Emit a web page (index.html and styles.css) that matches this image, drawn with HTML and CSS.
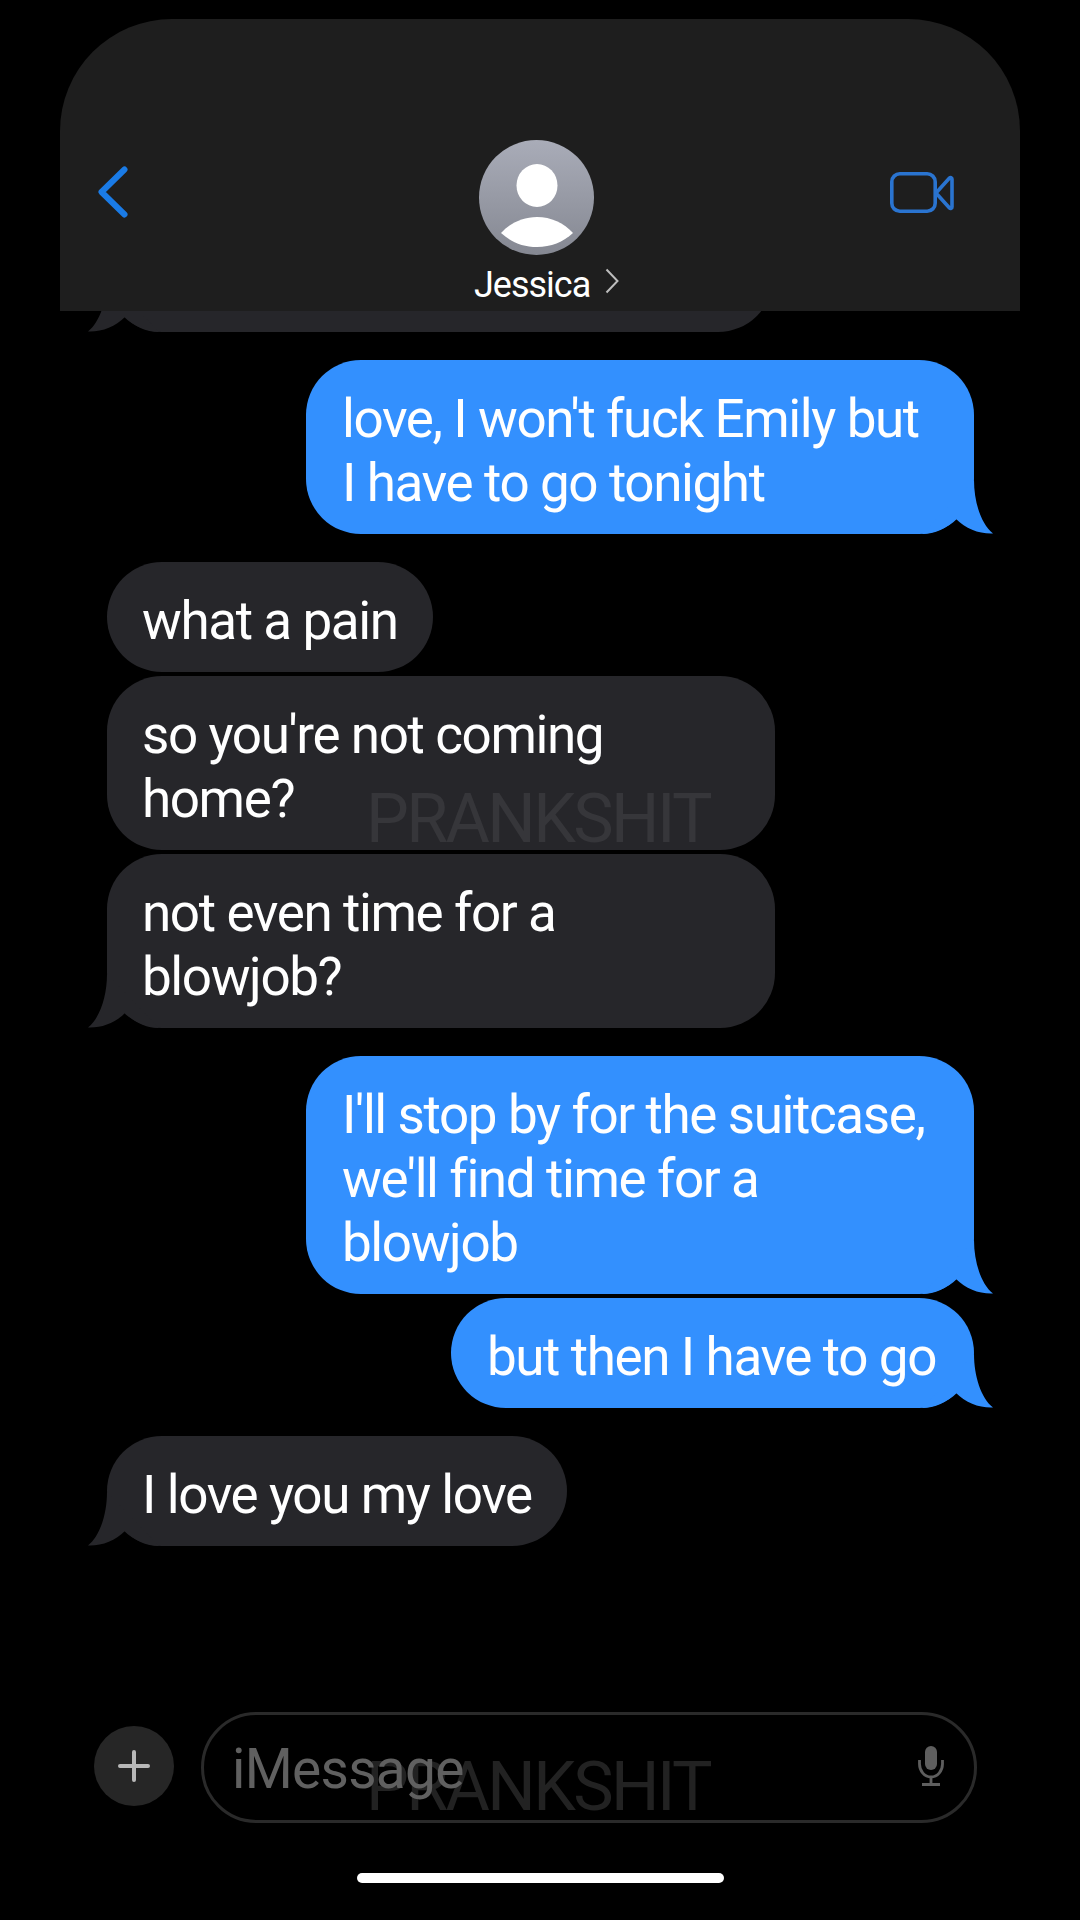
FILE: index.html
```html
<!DOCTYPE html>
<html lang="en">
<head>
<meta charset="utf-8">
<title>Jessica</title>
<link rel="stylesheet" href="styles.css">
</head>
<body>
<div class="page">
  <header class="header">
    <div class="nav-left">
      <svg class="back" viewBox="0 0 30 52" aria-hidden="true"><path d="M26.500 3.500 3.500 26l23 22.500" /></svg>
    </div>
    <div class="contact">
      <svg class="avatar" viewBox="0 0 115 115" aria-hidden="true">
        <defs><linearGradient id="av" x1="0" y1="0" x2="0" y2="1"><stop offset="0" stop-color="#a9acb8"/><stop offset="1" stop-color="#858892"/></linearGradient></defs>
        <circle cx="57.500" cy="57.500" r="57.500" fill="url(#av)"/>
        <ellipse cx="58" cy="45.500" rx="20.500" ry="21.500" fill="#fff"/>
        <path d="M22 93C31 83 44 77 58 77s27 6 36 16C84 102 72 107 58 107S32 102 22 93Z" fill="#fff"/>
      </svg>
      <div class="name-row">
        <span class="name">Jessica</span>
        <svg class="name-chev" viewBox="0 0 14 26" aria-hidden="true"><path d="M1.500 1.500 12.500 13 1.500 24.500"/></svg>
      </div>
    </div>
    <div class="nav-right">
      <svg class="video" viewBox="0 0 64 45" aria-hidden="true">
        <rect x="1.800" y="3.800" width="43.400" height="37.400" rx="8"/>
        <path d="M46 23 59.500 8c1-1 2.500-.5 2.500 1v28c0 1.500-1.500 2-2.500 1Z"/>
      </svg>
    </div>
  </header>

  <main class="thread">
    <div class="bubble in tail clipped">&nbsp;
      <svg class="tail-in" viewBox="0 0 72 54" aria-hidden="true"><path d="M53 0C53 22 60 44 72 53.500 58 54 45 49 35 39 26 48 14 54 1 54Z"/></svg>
    </div>
    <div class="bubble out tail wide group">love, I won't fuck Emily but<br>I have to go tonight
      <svg class="tail-out" viewBox="0 0 72 54" aria-hidden="true"><path d="M53 0C53 22 60 44 72 53.500 58 54 45 49 35 39 26 48 14 54 1 54Z"/></svg>
    </div>
    <div class="bubble in group">what a pain</div>
    <div class="bubble in wide near">so you're not coming<br>home?</div>
    <div class="bubble in tail wide near">not even time for a<br>blowjob?
      <svg class="tail-in" viewBox="0 0 72 54" aria-hidden="true"><path d="M53 0C53 22 60 44 72 53.500 58 54 45 49 35 39 26 48 14 54 1 54Z"/></svg>
    </div>
    <div class="bubble out tail wide group">I'll stop by for the suitcase,<br>we'll find time for a<br>blowjob
      <svg class="tail-out" viewBox="0 0 72 54" aria-hidden="true"><path d="M53 0C53 22 60 44 72 53.500 58 54 45 49 35 39 26 48 14 54 1 54Z"/></svg>
    </div>
    <div class="bubble out tail near">but then I have to go
      <svg class="tail-out" viewBox="0 0 72 54" aria-hidden="true"><path d="M53 0C53 22 60 44 72 53.500 58 54 45 49 35 39 26 48 14 54 1 54Z"/></svg>
    </div>
    <div class="bubble in tail group">I love you my love
      <svg class="tail-in" viewBox="0 0 72 54" aria-hidden="true"><path d="M53 0C53 22 60 44 72 53.500 58 54 45 49 35 39 26 48 14 54 1 54Z"/></svg>
    </div>
  </main>

  <footer class="composer">
    <div class="plus">
      <svg viewBox="0 0 32 32" aria-hidden="true"><path d="M16 2v28M2 16h28"/></svg>
    </div>
    <div class="input">
      <span class="placeholder">iMessage</span>
      <svg class="mic" viewBox="0 0 28 40" aria-hidden="true">
        <rect class="mic-body" x="8" y="0" width="12" height="24" rx="6"/>
        <path class="mic-stand" d="M2.500 14v4c0 7 5 13 11.500 13s11.500-6 11.500-13v-4M14 31v7M5 38.500h18"/>
      </svg>
    </div>
  </footer>
  <div class="home-bar"></div>

  <div class="watermark wm-bubble">PRANKSHIT</div>
  <div class="watermark wm-input">PRANKSHIT</div>
</div>
</body>
</html>
```

FILE: styles.css
```css
* { box-sizing: border-box; }
html, body { margin: 0; padding: 0; background: #000; }
.page {
  position: relative;
  width: 1080px;
  height: 1920px;
  overflow: hidden;
  display: flex;
  flex-direction: column;
  background: #000;
  font-family: Roboto, "Liberation Sans", sans-serif;
  color: #fff;
}
.header {
  position: relative;
  z-index: 2;
  flex: none;
  margin: 19px 60px 0;
  height: 292px;
  padding-top: 121px;
  background: #1e1e1e;
  border-radius: 112px 112px 0 0;
  display: grid;
  grid-template-columns: 414px 142px 1fr;
}
.nav-left { padding: 26px 0 0 38px; }
.back { display: block; width: 30px; height: 52px; }
.back path { fill: none; stroke: #1a7be6; stroke-width: 6; stroke-linecap: round; stroke-linejoin: round; }
.contact { display: flex; flex-direction: column; align-items: flex-start; }
.avatar { display: block; width: 115px; height: 115px; margin-left: 5px; }
.name-row { display: flex; align-items: flex-start; margin-top: 10px; }
.name { font-size: 36px; line-height: 40px; letter-spacing: -1px; color: #fff; }
.name-chev { width: 14px; height: 26px; margin: 3px 0 0 15px; flex: none; }
.name-chev path { fill: none; stroke: #bdbdbd; stroke-width: 2; }
.nav-right { display: flex; justify-content: flex-end; padding: 30px 66px 0 0; align-items: flex-start; }
.video { width: 64px; height: 45px; display: block; }
.video rect, .video path { fill: none; stroke: #2a74d0; stroke-width: 3.600; stroke-linejoin: round; }

.thread {
  flex: none;
  display: flex;
  flex-direction: column;
  align-items: flex-start;
  margin-top: -89px;
  padding: 0 106px 0 107px;
}
.bubble {
  position: relative;
  padding: 27px 38px 19px 36px;
  font-size: 53px;
  line-height: 64px;
  letter-spacing: -1.400px;
  border-radius: 55px;
  white-space: nowrap;
}
.wide { width: 668px; }
.group { margin-top: 28px; }
.near { margin-top: 4px; }
.in { background: #26262a; align-self: flex-start; padding-right: 35px; padding-left: 35px; }
.out { background: #3390fe; align-self: flex-end; }
.clipped { height: 110px; width: 666px; }
.tail-in, .tail-out { position: absolute; bottom: 0; width: 72px; height: 54px; display: block; }
.tail-out { right: -19px; fill: #3390fe; }
.tail-in { left: -19px; fill: #26262a; transform: scaleX(-1); }

.composer {
  margin-top: auto;
  flex: none;
  display: flex;
  align-items: center;
  gap: 27px;
  padding-left: 94px;
}
.plus {
  width: 80px;
  height: 80px;
  margin-top: -3px;
  border-radius: 50%;
  background: #262626;
  display: flex;
  align-items: center;
  justify-content: center;
  flex: none;
}
.plus svg { width: 32px; height: 32px; display: block; }
.plus path { fill: none; stroke: #b8b8b8; stroke-width: 4; stroke-linecap: round; }
.input {
  position: relative;
  z-index: 1;
  width: 776px;
  height: 111px;
  border: 3px solid #2a2a2a;
  border-radius: 56px;
  display: flex;
  align-items: center;
  justify-content: space-between;
  padding: 0 29px 0 28px;
}
.placeholder { font-size: 55px; line-height: 64px; letter-spacing: -0.700px; color: #606060; padding-top: 2px; }
.mic { width: 28px; height: 40px; display: block; margin-top: -4px; }
.mic-body { fill: #5e5e5e; }
.mic-stand { fill: none; stroke: #5e5e5e; stroke-width: 2.800; }
.home-bar {
  flex: none;
  width: 367px;
  height: 10px;
  margin: 50px 0 37px 357px;
  border-radius: 5px;
  background: #fff;
}
.watermark {
  position: absolute;
  left: 366px;
  font-family: Roboto, "Liberation Sans", sans-serif;
  font-size: 68px;
  line-height: 68px;
  letter-spacing: -2.600px;
  white-space: nowrap;
}
.wm-bubble { top: 785px; color: #36363a; }
.wm-input { top: 1753px; color: #222; z-index: 0; }
```
